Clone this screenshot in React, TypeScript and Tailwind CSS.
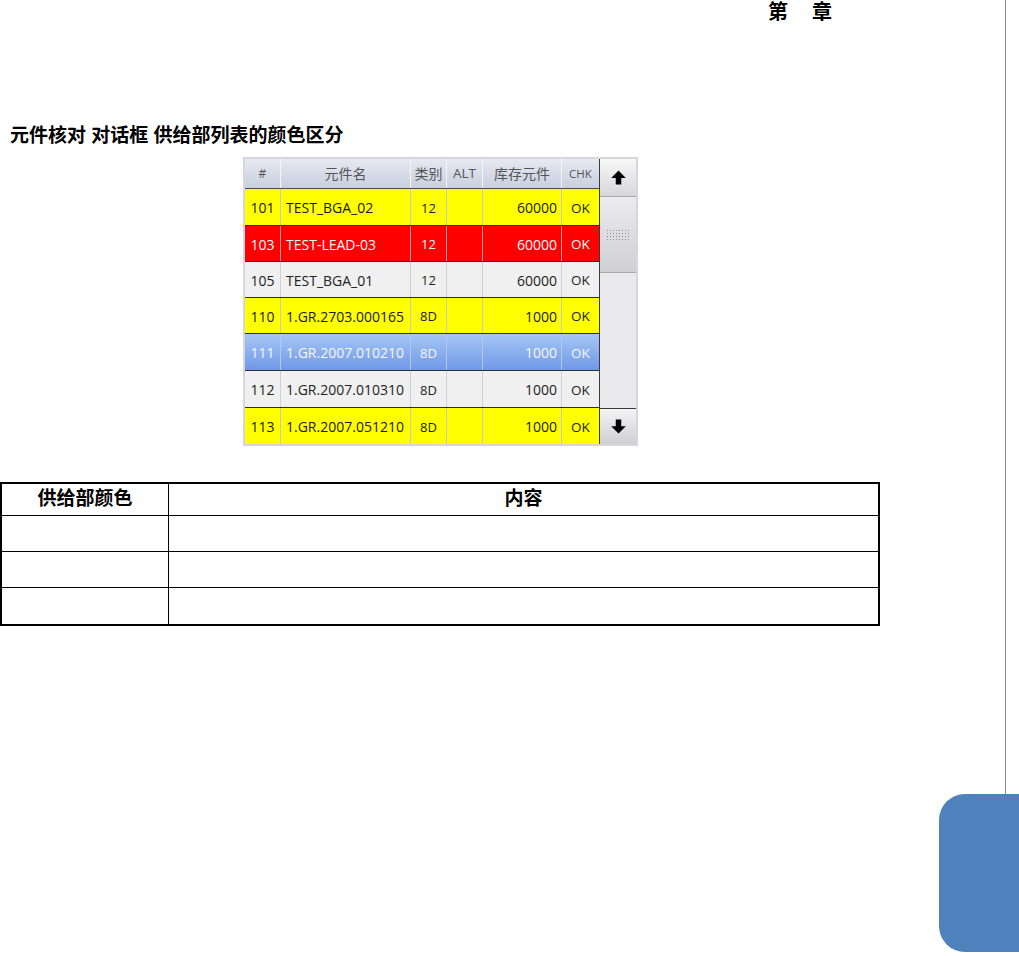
import React from 'react';

type Row = {
  no: string;
  name: string;
  kind: string;
  stock: string;
  tone: 'yellow' | 'red' | 'grey' | 'blue';
  h: string;
};

const rows: Row[] = [
  { no: '101', name: 'TEST_BGA_02', kind: '12', stock: '60000', tone: 'yellow', h: 'h-[37px]' },
  { no: '103', name: 'TEST-LEAD-03', kind: '12', stock: '60000', tone: 'red', h: 'h-[36px]' },
  { no: '105', name: 'TEST_BGA_01', kind: '12', stock: '60000', tone: 'grey', h: 'h-[36px]' },
  { no: '110', name: '1.GR.2703.000165', kind: '8D', stock: '1000', tone: 'yellow', h: 'h-[36px]' },
  { no: '111', name: '1.GR.2007.010210', kind: '8D', stock: '1000', tone: 'blue', h: 'h-[37px]' },
  { no: '112', name: '1.GR.2007.010310', kind: '8D', stock: '1000', tone: 'grey', h: 'h-[37px]' },
  { no: '113', name: '1.GR.2007.051210', kind: '8D', stock: '1000', tone: 'yellow', h: 'h-[36px]' },
];

const toneRow: Record<Row['tone'], string> = {
  yellow: 'bg-[#ffff00] text-[#1a1a1a]',
  red: 'bg-[#ff0000] text-white',
  grey: 'bg-[#f0f0f0] text-[#222]',
  blue: 'bg-gradient-to-b from-[#a6c6f4] to-[#6f98e6] text-[#f4f7ff]',
};

const toneSep: Record<Row['tone'], string> = {
  yellow: 'border-[#c4c6d0]',
  red: 'border-[#ff9a9a]',
  grey: 'border-[#cfcfd6]',
  blue: 'border-[#b3c8ee]',
};

function Arrow({ down }: { down?: boolean }) {
  return (
    <svg width="15" height="15" viewBox="0 0 12 12" className={down ? 'rotate-180' : ''}>
      <path d="M6 0.4 L11.8 6.3 H8.2 V11.6 H3.8 V6.3 H0.2 Z" fill="#000" />
    </svg>
  );
}

function Grip() {
  const dots = [];
  for (let r = 0; r < 4; r++) {
    for (let c = 0; c < 8; c++) {
      dots.push(<rect key={`${r}-${c}`} x={c * 3} y={r * 3} width="1" height="1" fill="#8f8f96" />);
    }
  }
  return (
    <svg width="23" height="10" viewBox="0 0 23 10">
      {dots}
    </svg>
  );
}

function FeederList() {
  return (
    <div className="flex w-fit border-2 border-[#d6d7dc] bg-white font-['Open_Sans','Noto_Sans_CJK_SC',sans-serif]">
      <div className="flex w-[354px] flex-col">
        <div className="flex h-[30px] items-center border-b border-[#4a4a4a] bg-gradient-to-b from-[#e6e9f2] to-[#c9cfde] text-[#555]">
          <div className="flex h-full w-[36px] items-center justify-center border-r border-[#f4f5f8] text-[12px]">#</div>
          <div className="flex h-full w-[130px] items-center justify-center border-r border-[#f4f5f8] text-[14px]">元件名</div>
          <div className="flex h-full w-[36px] items-center justify-center border-r border-[#f4f5f8] text-[14px]">类别</div>
          <div className="flex h-full w-[36px] items-center justify-center border-r border-[#f4f5f8] text-[13.5px]">ALT</div>
          <div className="flex h-full w-[79px] items-center justify-center border-r border-[#f4f5f8] text-[14px]">库存元件</div>
          <div className="flex h-full w-[37px] items-center justify-center text-[11.5px]">CHK</div>
        </div>
        {rows.map((r, i) => (
          <div
            key={r.no}
            className={`flex ${r.h} items-center ${i < rows.length - 1 ? 'border-b border-[#2e2e2e]' : ''} ${toneRow[r.tone]}`}
          >
            <div className={`flex h-full w-[36px] items-center justify-center border-r pt-px text-[14px] ${toneSep[r.tone]}`}>{r.no}</div>
            <div className={`flex h-full w-[130px] items-center border-r pl-[5px] pt-px text-[14px] ${toneSep[r.tone]}`}>{r.name}</div>
            <div className={`flex h-full w-[36px] items-center justify-center border-r pt-[3px] text-[13px] ${toneSep[r.tone]}`}>{r.kind}</div>
            <div className={`h-full w-[36px] border-r ${toneSep[r.tone]}`}></div>
            <div className={`flex h-full w-[79px] items-center justify-end border-r pr-[4px] pt-px text-[14px] ${toneSep[r.tone]}`}>{r.stock}</div>
            <div className="flex h-full w-[37px] items-center justify-center pt-[2px] text-[13.5px]">OK</div>
          </div>
        ))}
      </div>
      <div className="flex w-[37px] flex-col border-l border-[#3a3a3a] bg-[#e8e8ed]">
        <div className="flex h-[38px] items-center justify-center border-b border-[#a9a9ae] bg-gradient-to-b from-[#f8f8f8] to-[#d7d7da]">
          <Arrow />
        </div>
        <div className="flex h-[76px] items-center justify-center border-b border-[#a9a9ae] bg-gradient-to-b from-[#ececee] to-[#cfcfd4]">
          <Grip />
        </div>
        <div className="flex-1"></div>
        <div className="flex h-[36px] items-center justify-center border-t border-[#3a3a3a] bg-gradient-to-b from-[#f4f4f5] to-[#cfcfd3]">
          <Arrow down />
        </div>
      </div>
    </div>
  );
}

function ColorTable() {
  const body = ['', '', ''];
  return (
    <div className="w-[880px] border-2 border-black text-black">
      <div className="flex h-[32px] border-b border-black text-[19px] font-bold">
        <div className="flex w-[167px] items-center justify-center border-r border-black">供给部颜色</div>
        <div className="flex flex-1 items-center justify-center">内容</div>
      </div>
      {body.map((_, i) => (
        <div key={i} className={`flex h-[36px] ${i < body.length - 1 ? 'border-b border-black' : ''}`}>
          <div className="w-[167px] border-r border-black"></div>
          <div className="flex-1"></div>
        </div>
      ))}
    </div>
  );
}

export default function App() {
  return (
    <div className="relative h-[956px] w-full overflow-hidden bg-white font-['Liberation_Sans','Noto_Sans_CJK_SC',sans-serif]">
      <div className="flex gap-[24px] pl-[768px] text-[20px] font-bold leading-[24px] text-black">
        <span>第</span>
        <span>章</span>
      </div>

      <h1 className="mt-[100px] pl-[10px] text-[19px] font-bold leading-[24px] text-black">
        元件核对 对话框 供给部列表的颜色区分
      </h1>

      <div className="mt-[9px] pl-[243px]">
        <FeederList />
      </div>

      <div className="mt-[36px]">
        <ColorTable />
      </div>

      {/* page edge line and chapter tab */}
      <div className="absolute left-[1005px] top-0 h-[794px] w-px bg-[#8a8a8a]"></div>
      <div className="absolute left-[939px] top-[794px] h-[158px] w-[80px] rounded-l-[26px] bg-[#4f81bd]"></div>
    </div>
  );
}
